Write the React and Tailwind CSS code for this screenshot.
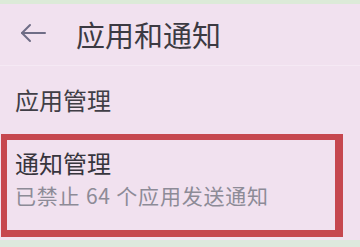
export default function App() {
  const font = { fontFamily: '"Noto Sans CJK SC", "Noto Sans", sans-serif' };
  return (
    <div className="w-[360px] h-[247px] overflow-hidden bg-[#f1e1ef] flex flex-col" style={font}>
      <div className="h-[4px] bg-[#dcead8]" />
      <div className="h-[62px] flex items-center pl-[20px] border-b border-[#f5e9f4]">
        <svg width="26" height="20" viewBox="0 0 26 20" className="mt-[-4px]" fill="none" stroke="#6f6d86" strokeWidth="2" strokeLinecap="round" strokeLinejoin="round">
          <path d="M25 10H2" />
          <path d="M10 2L2 10L10 18" />
        </svg>
        <div className="ml-[30px] text-[29px] leading-none text-[#3c3a42]">应用和通知</div>
      </div>
      <div className="h-[68px] flex items-center pl-[15px] text-[24px] text-[#403e46]">应用管理</div>
      <div className="ml-[1px] w-[342px] h-[103px] border-[6px] border-r-[8px] border-b-[7px] border-[#c6474f] pl-[8px] pt-[8px]">
        <div className="text-[24px] leading-[30px] text-[#37353d]">通知管理</div>
        <div className="mt-[4px] text-[21px] leading-[26px] tracking-[0.8px] text-[#8d8b97]">已禁止 64 个应用发送通知</div>
      </div>
      <div className="h-[3px]" />
      <div className="flex-1 bg-[#dde9dd]" />
    </div>
  );
}
